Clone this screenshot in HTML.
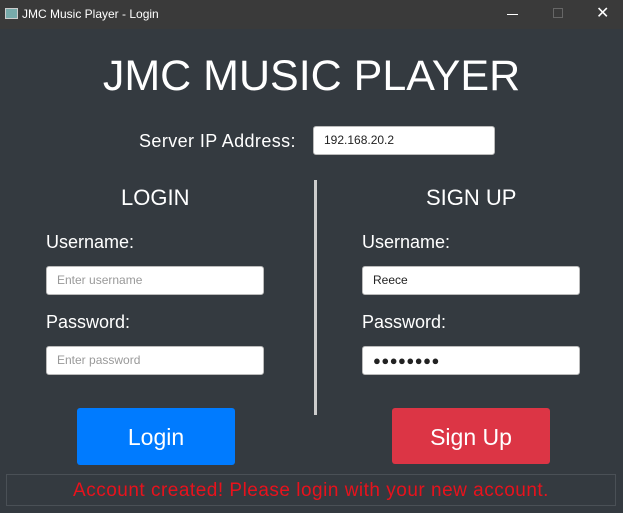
<!DOCTYPE html>
<html><head><style>
*{margin:0;padding:0;box-sizing:border-box}
body{width:623px;height:513px;background:#343a40;font-family:"Liberation Sans",sans-serif;position:relative;overflow:hidden;color:#fff}
.tb{position:absolute;left:0;top:0;width:623px;height:29px;background:#3a3a3a;font-size:12px;color:#fff}
.a{position:absolute;white-space:nowrap}
.in{position:absolute;background:#fff;border:1px solid #bbb;border-radius:3px;color:#222;font-size:12px;padding-left:10px;line-height:27px;height:29px}
.ph{color:#999}
.btn{position:absolute;border-radius:3px;font-size:23px;text-align:center;line-height:58px;color:#fff}
</style></head><body>
<div class="tb">
<div class="a" style="left:5px;top:8px;width:13px;height:11px;background:#7aa;border:1px solid #ccc"></div>
<div class="a" style="left:22px;top:7px">JMC Music Player - Login</div>
<div class="a" style="left:507px;top:14px;width:11px;height:1px;background:#fff"></div>
<div class="a" style="left:553px;top:8px;width:10px;height:10px;border:1px solid #666"></div>
<div class="a" style="left:596px;top:3px;font-size:16px">✕</div>
</div>
<div class="a" style="left:0;width:623px;top:52px;text-align:center;font-size:43px;letter-spacing:0px">JMC MUSIC PLAYER</div>
<div class="a" style="left:139px;top:131px;font-size:18px;letter-spacing:0.4px">Server IP Address:</div>
<div class="in" style="left:313px;top:126px;width:182px">192.168.20.2</div>
<div class="a" style="left:121px;top:185px;font-size:22px">LOGIN</div>
<div class="a" style="left:426px;top:185px;font-size:22px">SIGN UP</div>
<div class="a" style="left:314px;top:180px;width:3px;height:235px;background:#ccc"></div>
<div class="a" style="left:46px;top:232px;font-size:18px">Username:</div>
<div class="a" style="left:46px;top:312px;font-size:18px">Password:</div>
<div class="a" style="left:362px;top:232px;font-size:18px">Username:</div>
<div class="a" style="left:362px;top:312px;font-size:18px">Password:</div>
<div class="in ph" style="left:46px;top:266px;width:218px">Enter username</div>
<div class="in ph" style="left:46px;top:346px;width:218px">Enter password</div>
<div class="in" style="left:362px;top:266px;width:218px">Reece</div>
<div class="in" style="left:362px;top:346px;width:218px;font-size:13px;letter-spacing:0.5px">●●●●●●●●</div>
<div class="btn" style="left:77px;top:408px;width:158px;height:57px;background:#007bff">Login</div>
<div class="btn" style="left:392px;top:408px;width:158px;height:56px;background:#dc3545">Sign Up</div>
<div class="a" style="left:6px;top:474px;width:610px;height:32px;border:1px solid #4a5056;color:#e8121c;font-size:19px;letter-spacing:0.5px;text-align:center;line-height:32px">Account created! Please login with your new account.</div>
</body></html>
